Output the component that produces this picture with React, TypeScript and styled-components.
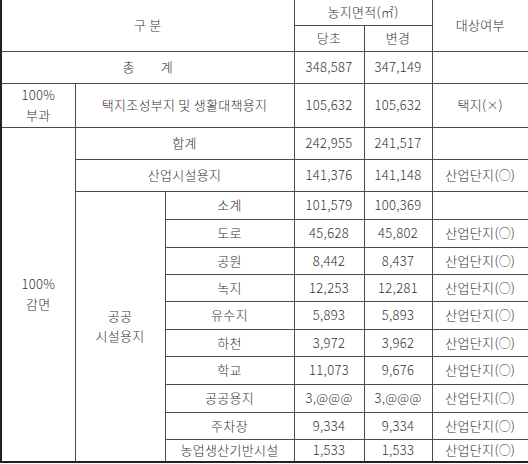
import React from 'react';
import styled, { createGlobalStyle } from 'styled-components';

const GlobalStyle = createGlobalStyle`
  body {
    margin: 0;
    background: #ffffff;
  }
`;

const Table = styled.table`
  width: 528px;
  border-collapse: collapse;
  table-layout: fixed;
  font-family: 'Noto Sans CJK KR', sans-serif;
  font-size: 13px;
  font-weight: 300;
  letter-spacing: 0.3px;
  color: #333333;
  border-left: 2px solid #222222;
  border-right: 2px solid #222222;
  border-bottom: 2px solid #222222;
`;

const Row = styled.tr<{ $h: number }>`
  height: ${({ $h }) => $h}px;
`;

const Cell = styled.td`
  border: 1px solid #4a4a4a;
  text-align: center;
  vertical-align: middle;
  padding: 0;
  line-height: 20px;
  white-space: nowrap;
`;

const HeadCell = styled(Cell)`
  border-top: none;
`;

const Wide = styled.span`
  margin-left: 26px;
`;

const Mark = styled.span`
  font-size: 12px;
  letter-spacing: 0;
`;

function Target({ label, mark }: { label: string; mark: string }): React.ReactElement {
  return (
    <>
      {label}(<Mark>{mark}</Mark>)
    </>
  );
}

const subRows: { name: string; a: string; b: string; target: boolean; h: number }[] = [
  { name: '소계', a: '101,579', b: '100,369', target: false, h: 28 },
  { name: '도로', a: '45,628', b: '45,802', target: true, h: 28 },
  { name: '공원', a: '8,442', b: '8,437', target: true, h: 27 },
  { name: '녹지', a: '12,253', b: '12,281', target: true, h: 27 },
  { name: '유수지', a: '5,893', b: '5,893', target: true, h: 28 },
  { name: '하천', a: '3,972', b: '3,962', target: true, h: 27 },
  { name: '학교', a: '11,073', b: '9,676', target: true, h: 28 },
  { name: '공공용지', a: '3,@@@', b: '3,@@@', target: true, h: 28 },
  { name: '주차장', a: '9,334', b: '9,334', target: true, h: 27 },
  { name: '농업생산기반시설', a: '1,533', b: '1,533', target: true, h: 23 },
];

export default function App(): React.ReactElement {
  return (
    <>
      <GlobalStyle />
      <Table>
        <colgroup>
          <col style={{ width: 74 }} />
          <col style={{ width: 90 }} />
          <col style={{ width: 129 }} />
          <col style={{ width: 70 }} />
          <col style={{ width: 68 }} />
          <col style={{ width: 97 }} />
        </colgroup>
        <tbody>
          <Row $h={25}>
            <HeadCell colSpan={3} rowSpan={2}>구 분</HeadCell>
            <HeadCell colSpan={2}>농지면적(㎡)</HeadCell>
            <HeadCell rowSpan={2}>대상여부</HeadCell>
          </Row>
          <Row $h={26}>
            <Cell>당초</Cell>
            <Cell>변경</Cell>
          </Row>
          <Row $h={32}>
            <Cell colSpan={3}>
              총<Wide>계</Wide>
            </Cell>
            <Cell>348,587</Cell>
            <Cell>347,149</Cell>
            <Cell />
          </Row>
          <Row $h={44}>
            <Cell>
              100%
              <br />
              부과
            </Cell>
            <Cell colSpan={2}>택지조성부지 및 생활대책용지</Cell>
            <Cell>105,632</Cell>
            <Cell>105,632</Cell>
            <Cell>
              <Target label="택지" mark="×" />
            </Cell>
          </Row>
          <Row $h={32}>
            <Cell rowSpan={12}>
              100%
              <br />
              감면
            </Cell>
            <Cell colSpan={2}>합계</Cell>
            <Cell>242,955</Cell>
            <Cell>241,517</Cell>
            <Cell />
          </Row>
          <Row $h={32}>
            <Cell colSpan={2}>산업시설용지</Cell>
            <Cell>141,376</Cell>
            <Cell>141,148</Cell>
            <Cell>
              <Target label="산업단지" mark="○" />
            </Cell>
          </Row>
          {subRows.map((r, i) => (
            <Row $h={r.h} key={r.name}>
              {i === 0 && (
                <Cell rowSpan={subRows.length}>
                  공공
                  <br />
                  시설용지
                </Cell>
              )}
              <Cell>{r.name}</Cell>
              <Cell>{r.a}</Cell>
              <Cell>{r.b}</Cell>
              <Cell>{r.target && <Target label="산업단지" mark="○" />}</Cell>
            </Row>
          ))}
        </tbody>
      </Table>
    </>
  );
}
